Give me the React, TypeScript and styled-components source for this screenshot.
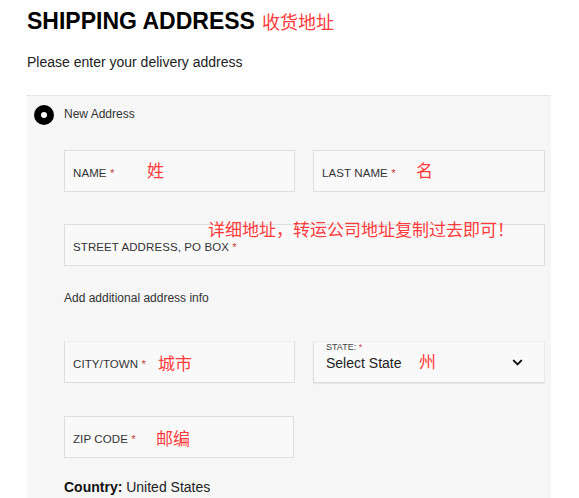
import React from "react";
import styled, { createGlobalStyle } from "styled-components";
import { ChevronDown } from "lucide-react";

const GlobalStyle = createGlobalStyle`
    body {
        margin: 0;
        background: #fff;
        font-family: "Liberation Sans", Arial, sans-serif;
        color: #222;
    }
`;

const CJK = `"Noto Sans CJK SC", "Liberation Sans", sans-serif`;

const App = () => {
    return (
        <>
            <GlobalStyle />
            <Page>
                <Heading>
                    SHIPPING ADDRESS<Note inline size={18}>收货地址</Note>
                </Heading>
                <Intro>Please enter your delivery address</Intro>
                <Panel>
                    <RadioRow>
                        <Radio />
                        <span>New Address</span>
                    </RadioRow>

                    <FieldRow>
                        <Field>
                            <Label>NAME <Star>*</Star></Label>
                            <Note left={82} top={8}>姓</Note>
                        </Field>
                        <Field>
                            <Label>LAST NAME <Star>*</Star></Label>
                            <Note left={102} top={8}>名</Note>
                        </Field>
                    </FieldRow>

                    <FieldRow single>
                        <Field>
                            <Label>STREET ADDRESS, PO BOX <Star>*</Star></Label>
                            <Note left={143} top={-7}>详细地址，转运公司地址复制过去即可！</Note>
                        </Field>
                    </FieldRow>

                    <AddInfo>Add additional address info</AddInfo>

                    <FieldRow gapTop={35}>
                        <Field faded>
                            <Label>CITY/TOWN <Star>*</Star></Label>
                            <Note left={93} top={10}>城市</Note>
                        </Field>
                        <SelectField faded>
                            <SelectText>
                                <SmallLabel>STATE: <Star>*</Star></SmallLabel>
                                <SelectValue>Select State</SelectValue>
                            </SelectText>
                            <Note left={105} top={8}>州</Note>
                            <ChevronDown size={15} strokeWidth={3.2} color="#111" />
                        </SelectField>
                    </FieldRow>

                    <FieldRow gapTop={33}>
                        <Field narrow>
                            <Label>ZIP CODE <Star>*</Star></Label>
                            <Note left={91} top={10}>邮编</Note>
                        </Field>
                    </FieldRow>

                    <Country>
                        <b>Country:</b> United States
                    </Country>
                </Panel>
            </Page>
        </>
    );
};

export default App;

const Page = styled.div`
    padding: 8px 0 0 27px;
    width: 524px;
`;

const Heading = styled.h1`
    margin: 0;
    font-size: 23px;
    line-height: 26px;
    font-weight: 700;
    color: #000;
    display: flex;
    align-items: center;
    gap: 7px;
`;

const Note = styled.span<{ left?: number; top?: number; inline?: boolean; size?: number }>`
    font-family: ${CJK};
    color: #ff3b3b;
    font-size: ${(p) => p.size ?? 17}px;
    font-weight: 400;
    line-height: 22px;
    white-space: nowrap;
    position: ${(p) => (p.inline ? "static" : "absolute")};
    left: ${(p) => p.left ?? 0}px;
    top: ${(p) => p.top ?? 0}px;
`;

const Intro = styled.p`
    margin: 20px 0 0;
    font-size: 14px;
    line-height: 16px;
    color: #222;
`;

const Panel = styled.div`
    margin-top: 25px;
    background: #f6f6f6;
    border-top: 1px dotted #d6d6d6;
    padding: 9px 6px 4px 37px;
`;

const RadioRow = styled.div`
    display: flex;
    align-items: center;
    gap: 10px;
    margin-left: -30px;
    height: 18px;
    font-size: 12px;
    color: #333;
`;

const Radio = styled.span`
    width: 6px;
    height: 6px;
    border: 7px solid #000;
    border-radius: 50%;
    background: #fff;
    margin-top: 2px;
`;

const FieldRow = styled.div<{ single?: boolean; gapTop?: number }>`
    display: grid;
    grid-template-columns: ${(p) => (p.single ? "1fr" : "231px 232px")};
    column-gap: 18px;
    margin-top: ${(p) => p.gapTop ?? (p.single ? 32 : 27)}px;
`;

const Field = styled.div<{ faded?: boolean; narrow?: boolean }>`
    position: relative;
    box-sizing: border-box;
    height: 42px;
    width: ${(p) => (p.narrow ? "230px" : "auto")};
    background: #f9f9f9;
    border: 1px solid #dedede;
    border-top-color: ${(p) => (p.faded ? "#f0f0f0" : "#dedede")};
    display: flex;
    align-items: center;
    padding: 3px 0 0 8px;
`;

const SelectField = styled(Field)`
    border-right-color: #ececec;
    box-shadow: 0 1px 1px rgba(0, 0, 0, 0.06);
    justify-content: space-between;
    padding: 0 19px 0 12px;
`;

const Label = styled.span`
    font-size: 11.5px;
    color: #333;
    letter-spacing: 0.1px;
`;

const Star = styled.span`
    color: #c44;
`;

const SelectText = styled.div`
    display: flex;
    flex-direction: column;
    align-self: flex-start;
    padding-top: 0;
`;

const SmallLabel = styled.span`
    font-size: 9px;
    line-height: 11px;
    color: #444;
`;

const SelectValue = styled.span`
    font-size: 14px;
    line-height: 18px;
    margin-top: 1px;
    color: #222;
`;

const AddInfo = styled.div`
    margin-top: 24px;
    font-size: 12px;
    line-height: 16px;
    color: #333;
`;

const Country = styled.div`
    margin-top: 21px;
    font-size: 14px;
    line-height: 16px;
    color: #222;
    b {
        color: #111;
    }
`;
